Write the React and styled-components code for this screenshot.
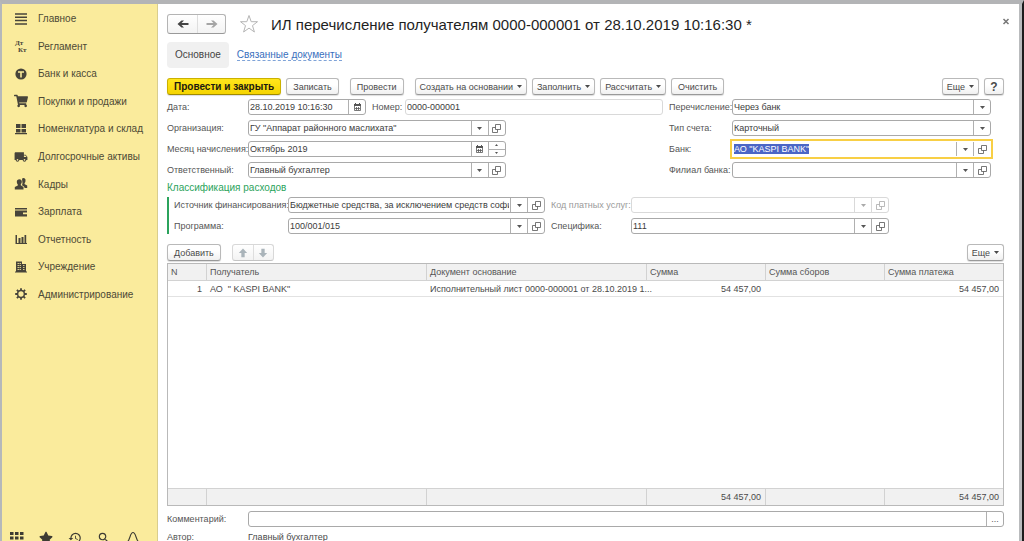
import { useEffect, useRef } from "react";
import styled, { createGlobalStyle, css } from "styled-components";
import { FaShoppingCart, FaStar } from "react-icons/fa";
import { MdHistory, MdLocalShipping, MdSearch } from "react-icons/md";

const GlobalStyle = createGlobalStyle`
  * {
    box-sizing: border-box;
  }

  body {
    margin: 0;
    overflow: hidden;
    font-family: "Liberation Sans", Arial, sans-serif;
    font-size: 9px;
    color: #4a4a4a;
  }

  button,
  input,
  select {
    margin: 0;
    font: inherit;
    color: inherit;
  }
`;

const Frame = styled.div`
  height: calc(100vh + 4px);
  display: flex;
  border-top: 4px solid #b3b4b6;
  border-left: 2px solid #b5b8ba;
  border-right: 2px solid #1c1c1c;
`;

const Sidebar = styled.aside`
  flex: 0 0 156px;
  display: flex;
  flex-direction: column;
  justify-content: space-between;
  background: #faeb9c;
  border-right: 1px solid #d9cd8d;
`;

const Menu = styled.nav`
  height: 303px;
  display: flex;
  flex-direction: column;
  margin-top: 1px;
`;

const MenuLink = styled.a`
  flex: 1;
  display: flex;
  align-items: center;
  gap: 10px;
  padding-left: 12px;
  color: #4d4936;
  font-size: 10px;
  text-decoration: none;
  white-space: nowrap;

  svg {
    width: 14px;
    height: 14px;
    color: #47443a;
  }
`;

const QuickBar = styled.div`
  display: flex;
  gap: 15px;
  padding: 0 0 0 8px;
`;

const IconButton = styled.button`
  display: flex;
  padding: 0;
  border: 0;
  background: none;
  color: #3d3b33;

  svg {
    width: 14px;
    height: 14px;
  }
`;

const Main = styled.main`
  flex: 1;
  min-width: 0;
  display: flex;
  flex-direction: column;
  padding: 10px 15px 0 9px;
  background: #fff;
  border-right: 3px solid #b9bbbd;
`;

const TitleRow = styled.header`
  display: flex;
  align-items: center;
  height: 20px;
`;

const Title = styled.h1`
  flex: 1;
  margin: 0 0 0 12px;
  font-size: 15px;
  font-weight: 400;
  color: #1f1f1f;
  white-space: nowrap;
`;

const ButtonPair = styled.div`
  display: flex;
  border: 1px solid ${(p) => (p.$faint ? "#d8d8d8" : "#b4b4b4")};
  border-bottom-color: ${(p) => (p.$faint ? "#c4c4c4" : "#999")};
  border-radius: 3px;
  background: linear-gradient(#fff, #f3f3f3);
`;

const PairButton = styled.button`
  display: flex;
  align-items: center;
  justify-content: center;
  width: ${(p) => p.$width}px;
  height: ${(p) => p.$height}px;
  padding: 0;
  border: 0;
  background: none;

  & + & {
    border-left: 1px solid #dedede;
  }
`;

const StarButton = styled(IconButton)`
  margin-left: 13px;

  svg {
    width: 20px;
    height: 20px;
  }
`;

const CloseButton = styled(IconButton)`
  align-self: flex-start;
  margin-right: -7px;

  svg {
    width: 10px;
    height: 14px;
  }
`;

const Tabs = styled.nav`
  display: flex;
  align-items: center;
  gap: 8px;
  margin-top: 8px;
  font-size: 10px;
`;

const Tab = styled.a`
  padding: 7px 8px;
  line-height: 12px;
  border-radius: 4px;
  background: #f0f0f0;
  color: #444;
  text-decoration: none;
`;

const TabLink = styled.a`
  color: #3a6fbd;
  line-height: 11px;
  text-decoration: none;
  border-bottom: 1px dashed #7fa3d8;
`;

const Toolbar = styled.div`
  display: flex;
  align-items: center;
  gap: 5px;
  margin-top: ${(p) => p.$top}px;
`;

const Group = styled.div`
  display: flex;
  gap: 5px;
  margin-right: ${(p) => p.$after || 0}px;
`;

const Spacer = styled.div`
  flex: 1;
`;

const Button = styled.button`
  display: flex;
  align-items: center;
  justify-content: center;
  gap: 4px;
  height: 17px;
  padding: 0 ${(p) => (p.$menu ? 4 : 6)}px;
  border: 1px solid #b9b9b9;
  border-bottom-color: #999;
  border-radius: 3px;
  background: linear-gradient(#fff 40%, #f0f0f0);
  box-shadow: 0 1px 1px #ddd;
  white-space: nowrap;

  ${(p) =>
    p.$primary &&
    css`
      border-color: #cbb100;
      border-bottom-color: #a08a00;
      background: linear-gradient(#ffe61c, #f5d400);
      color: #1c1a10;
      font-size: 10px;
      font-weight: 700;
    `}
`;

const HelpButton = styled(Button)`
  width: 20px;
  font-size: 12px;
  font-weight: 700;
`;

const FormGrid = styled.div`
  display: grid;
  grid-template-columns: 496fr 322fr;
  gap: 6px;
  margin: 4px 13px 0 0;
`;

const FieldColumn = styled.div`
  display: flex;
  flex-direction: column;
  gap: 5px;
  min-width: 0;
`;

const Row = styled.div`
  display: flex;
  align-items: center;
  height: 16px;
`;

const Label = styled.label`
  flex: 0 0 ${(p) => p.$width}px;
  min-width: 0;
  color: ${(p) => (p.$muted ? "#9a9a9a" : "#555")};
  white-space: nowrap;
`;

const FieldBox = styled.div`
  flex: ${(p) => (p.$basis ? `0 0 ${p.$basis}` : "1")};
  min-width: 0;
  display: flex;
  height: 16px;
  border: 1px solid ${(p) => (p.$muted ? "#d9d9d9" : "#a9a9a9")};
  border-radius: 3px;
  background: #fff;
  color: ${(p) => (p.$muted ? "#aaa" : "#555")};
  overflow: hidden;

  ${(p) =>
    p.$focused &&
    css`
      border-color: #fff;
      border-radius: 0;
      outline: 2px solid #f8cf45;
    `}
`;

const TextInput = styled.input`
  flex: 1;
  min-width: 0;
  padding: 0 1px;
  border: 0;
  outline: 0;
  background: none;
  color: #3c3c3c;

  &::selection {
    background: #4b66c6;
    color: #fff;
  }
`;

const Select = styled.select`
  flex: 1;
  min-width: 0;
  padding: 0 1px;
  border: 0;
  outline: 0;
  appearance: none;
  background: none;
  color: #3c3c3c;
`;

const FieldButton = styled.button`
  flex: 0 0 17px;
  display: flex;
  align-items: center;
  justify-content: center;
  padding: 0;
  border: 0;
  border-left: 1px solid ${(p) => (p.$muted ? "#d9d9d9" : "#b0b0b0")};
  background: none;
`;

const Spinner = styled.div`
  flex: 0 0 17px;
  display: flex;
  flex-direction: column;
  border-left: 1px solid #b0b0b0;
`;

const SpinButton = styled.button`
  flex: 1;
  display: flex;
  align-items: center;
  justify-content: center;
  padding: 0;
  border: 0;
  background: none;

  & + & {
    border-top: 1px solid #b0b0b0;
  }
`;

const SectionTitle = styled.h2`
  margin: 4px 0 3px;
  color: #2ba35c;
  font-size: 10px;
  font-weight: 400;
  line-height: 12px;
`;

const Section = styled.section`
  display: grid;
  grid-template-columns: 371fr 338fr;
  gap: 6px;
  margin-right: 115px;
  padding-left: 5px;
  border-left: 2px solid #2ba35c;
`;

const TableBox = styled.div`
  flex: 1;
  min-height: 0;
  display: grid;
  margin-top: 2px;
  border: 1px solid #b9b9b9;
`;

const Table = styled.table`
  width: 100%;
  height: 100%;
  table-layout: fixed;
  border-collapse: separate;
  border-spacing: 0;
`;

const HeadCell = styled.th`
  height: 17px;
  padding: 0 3px;
  border-left: ${(p) => (p.$first ? 0 : "1px solid #d2d2d2")};
  border-bottom: 1px solid #d2d2d2;
  background: #f1f1f1;
  color: #555;
  font-weight: 400;
  text-align: left;
`;

const Cell = styled.td`
  height: 16px;
  padding: 0 4px;
  border-bottom: 1px solid #e2e2e2;
  text-align: ${(p) => (p.$right ? "right" : "left")};
  white-space: pre;
`;

const FillerCell = styled.td`
  height: 100%;
  padding: 0;
`;

const FootCell = styled.td`
  height: 17px;
  padding: 0 4px;
  border-left: ${(p) => (p.$first ? 0 : "1px solid #d2d2d2")};
  border-top: 1px solid #d2d2d2;
  background: #f1f1f1;
  text-align: right;
`;

const Footer = styled.footer`
  display: flex;
  flex-direction: column;
  gap: 2px;
  margin-top: 5px;
`;

const Caret = () => (
  <svg width="5" height="3" viewBox="0 0 5 3" aria-hidden="true">
    <path d="M0 0h5L2.5 3z" fill="currentColor" />
  </svg>
);

const OpenIcon = () => (
  <svg
    width="9"
    height="9"
    viewBox="0 0 9 9"
    fill="none"
    stroke="currentColor"
    strokeWidth="0.8"
    aria-hidden="true"
  >
    <path d="M3.5 0.5h5v5h-5z" />
    <path d="M3.5 3.5h-3v5h5v-3" />
  </svg>
);

const CalendarIcon = () => (
  <svg width="9" height="9" viewBox="0 0 9 9" aria-hidden="true">
    <path d="M1 1h7v2H1zM2 0h1v1H2zM6 0h1v1H6z" fill="currentColor" />
    <path
      d="M1.5 2.5h6v5h-6zM2 5.5h5M3.5 4v3M5.5 4v3"
      fill="none"
      stroke="currentColor"
      strokeWidth="0.8"
    />
  </svg>
);

const Arrow = ({ dir, size, color }) => {
  const turn = { right: 0, down: 90, left: 180, up: 270 }[dir];
  return (
    <svg width={size} height={size} viewBox="0 0 12 12" aria-hidden="true">
      <path
        d={
          dir === "up" || dir === "down"
            ? "M1 4h5V1l5.5 5L6 11V8H1z"
            : "M0.5 5h7L5 2.5h2.5L11.5 6 7.5 9.5H5L7.5 7h-7z"
        }
        fill={color}
        transform={`rotate(${turn} 6 6)`}
      />
    </svg>
  );
};

const LinesIcon = () => (
  <svg viewBox="0 0 14 14">
    <path
      d="M1 2h12M1 5.3h12M1 8.6h12M1 12h12"
      stroke="currentColor"
      strokeWidth="1.5"
    />
  </svg>
);

const LedgerIcon = () => (
  <svg
    viewBox="0 0 14 14"
    fontFamily="Liberation Serif"
    fontSize="7"
    fontWeight="700"
  >
    <text x="1" y="6" fill="currentColor">
      Дт
    </text>
    <text x="4" y="13" fill="currentColor">
      Кт
    </text>
  </svg>
);

const CoinIcon = () => (
  <svg viewBox="0 0 14 14">
    <circle cx="7" cy="7" r="5.6" fill="currentColor" />
    <path d="M4 5h6M7 5v5.5" stroke="#faeb9c" strokeWidth="1.6" />
  </svg>
);

const BlocksIcon = () => (
  <svg viewBox="0 0 14 14">
    <path
      d="M2 2h4.5v4H2zM7.5 2H12v4H7.5zM2 7h4.500v3.500H2zM7.500 7H12v3.500H7.500zM1 11h12v1.200H1z"
      fill="currentColor"
    />
  </svg>
);

const PeopleIcon = () => (
  <svg viewBox="0 0 14 14" fill="currentColor">
    <path d="M8 1.8a2 2.3 0 0 1 3.5 2c0 1.2-.5 1.8-1 2.4l.2 1 2.5 1.3v2.5h-2.5L10 9.5 8 8.3l.5-2z" />
    <path d="M5.5 2.2c1.500 0 2.300 1 2.300 2.500 0 1.200-.5 2-1 2.600v1L9.500 10v2.500H.8V10l3-1.600v-1c-.6-.7-1-1.500-1-2.700 0-1.500 1-2.500 2.700-2.500z" />
  </svg>
);

const WalletIcon = () => (
  <svg viewBox="0 0 14 14" fill="currentColor">
    <path d="M1 3h12v1.600H1zM1 5.500h12v2H9v1.800h4v2.200H1z" />
  </svg>
);

const ChartIcon = () => (
  <svg viewBox="0 0 14 14" fill="currentColor">
    <path d="M1.5 3H3v8H1.500zM4.500 6h2v5h-2zM7.500 5h2v6h-2zM10.500 3h1.700v8h-1.700zM1.500 11H13v1H1.500z" />
  </svg>
);

const BuildingIcon = () => (
  <svg viewBox="0 0 14 14">
    <path
      d="M2 1.5h6v10H2zM8 4h4v7.500H8zM1 11.500h12v1H1z"
      fill="currentColor"
    />
    <path
      d="M3.5 3.5h3.500M3.500 5.500h3.500M3.500 7.500h3.500M3.500 9.500h3.500M9 5.500h2M9 7.500h2M9 9.500h2"
      stroke="#faeb9c"
      strokeWidth="0.8"
      strokeDasharray="1.5 0.5"
    />
  </svg>
);

const GearIcon = () => (
  <svg viewBox="0 0 14 14" fill="none" stroke="currentColor">
    <circle cx="7" cy="7" r="3.4" strokeWidth="1.5" />
    <path
      d="M7 1.200v2.400M7 10.400v2.400M1.200 7h2.400M10.400 7h2.400M2.900 2.900l1.700 1.700M9.400 9.400l1.700 1.700M2.900 11.100l1.700-1.700M9.400 4.600l1.700-1.700"
      strokeWidth="1.800"
    />
  </svg>
);

const GridIcon = () => (
  <svg viewBox="0 0 14 14" fill="currentColor">
    <path d="M0 1h3.500v3H0zM5 1h3.500v3H5zM10 1h3.500v3H10zM0 5.500h3.500v3H0zM5 5.500h3.500v3H5zM10 5.500h3.500v3H10zM0 10h3.500v3H0zM5 10h3.500v3H5zM10 10h3.500v3H10z" />
  </svg>
);

const BellIcon = () => (
  <svg viewBox="0 0 14 14" fill="none" stroke="currentColor" strokeWidth="1.2">
    <path d="M7 1.500C4 1.500 4.500 8 1.500 11h11C9.500 8 10 1.500 7 1.500zM6 13h2" />
  </svg>
);

const menuItems = [
  ["Главное", LinesIcon],
  ["Регламент", LedgerIcon],
  ["Банк и касса", CoinIcon],
  ["Покупки и продажи", FaShoppingCart],
  ["Номенклатура и склад", BlocksIcon],
  ["Долгосрочные активы", MdLocalShipping],
  ["Кадры", PeopleIcon],
  ["Зарплата", WalletIcon],
  ["Отчетность", ChartIcon],
  ["Учреждение", BuildingIcon],
  ["Администрирование", GearIcon],
];

const quickItems = [
  ["Все функции", GridIcon],
  ["Избранное", FaStar],
  ["История", MdHistory],
  ["Поиск", MdSearch],
  ["Оповещения", BellIcon],
];

function LookupField({ id, value, basis, muted, focused, inputRef }) {
  return (
    <FieldBox $basis={basis} $muted={muted} $focused={focused}>
      <TextInput id={id} ref={inputRef} defaultValue={value} disabled={muted} />
      <FieldButton type="button" aria-label="Выбрать" $muted={muted}>
        <Caret />
      </FieldButton>
      <FieldButton type="button" aria-label="Открыть" $muted={muted}>
        <OpenIcon />
      </FieldButton>
    </FieldBox>
  );
}

function SelectField({ id, options }) {
  return (
    <FieldBox>
      <Select id={id}>
        {options.map((option) => (
          <option key={option}>{option}</option>
        ))}
      </Select>
      <FieldButton type="button" aria-label="Выбрать">
        <Caret />
      </FieldButton>
    </FieldBox>
  );
}

function PaymentForm() {
  const bankRef = useRef(null);

  useEffect(() => {
    bankRef.current.focus();
    bankRef.current.select();
  }, []);

  return (
    <FormGrid>
      <FieldColumn>
        <Row>
          <Label htmlFor="date" $width={81}>Дата:</Label>
          <FieldBox $basis="118px">
            <TextInput id="date" defaultValue="28.10.2019 10:16:30" />
            <FieldButton type="button" aria-label="Календарь">
              <CalendarIcon />
            </FieldButton>
          </FieldBox>
          <Group $after={6} />
          <Label htmlFor="number" $width={33}>Номер:</Label>
          <FieldBox $muted>
            <TextInput id="number" defaultValue="0000-000001" />
          </FieldBox>
        </Row>
        <Row>
          <Label htmlFor="org" $width={81}>Организация:</Label>
          <LookupField id="org" basis="52%" value={'ГУ "Аппарат районного маслихата"'} />
        </Row>
        <Row>
          <Label htmlFor="month" $width={81}>Месяц начисления:</Label>
          <FieldBox $basis="52%">
            <TextInput id="month" defaultValue="Октябрь 2019" />
            <FieldButton type="button" aria-label="Календарь">
              <CalendarIcon />
            </FieldButton>
            <Spinner>
              <SpinButton type="button" aria-label="Больше">
                <svg width="3" height="2" viewBox="0 0 3 2">
                  <path d="M0 2h3L1.5 0z" fill="currentColor" />
                </svg>
              </SpinButton>
              <SpinButton type="button" aria-label="Меньше">
                <svg width="3" height="2" viewBox="0 0 3 2">
                  <path d="M0 0h3L1.5 2z" fill="currentColor" />
                </svg>
              </SpinButton>
            </Spinner>
          </FieldBox>
        </Row>
        <Row>
          <Label htmlFor="owner" $width={81}>Ответственный:</Label>
          <LookupField id="owner" basis="52%" value="Главный бухгалтер" />
        </Row>
      </FieldColumn>

      <FieldColumn>
        <Row>
          <Label htmlFor="transfer" $width={63}>Перечисление:</Label>
          <SelectField id="transfer" options={["Через банк", "Через кассу"]} />
        </Row>
        <Row>
          <Label htmlFor="account" $width={63}>Тип счета:</Label>
          <SelectField id="account" options={["Карточный", "Текущий"]} />
        </Row>
        <Row>
          <Label htmlFor="bank" $width={63}>Банк:</Label>
          <LookupField id="bank" inputRef={bankRef} focused value={'АО "KASPI BANK"'} />
        </Row>
        <Row>
          <Label htmlFor="branch" $width={63}>Филиал банка:</Label>
          <LookupField id="branch" value="" />
        </Row>
      </FieldColumn>
    </FormGrid>
  );
}

function ExpenseSection() {
  return (
    <>
      <SectionTitle>Классификация расходов</SectionTitle>
      <Section>
        <FieldColumn>
          <Row>
            <Label htmlFor="source" $width={114}>Источник финансирования:</Label>
            <LookupField
              id="source"
              value="Бюджетные средства, за исключением средств софинансирования"
            />
          </Row>
          <Row>
            <Label htmlFor="program" $width={114}>Программа:</Label>
            <LookupField id="program" value="100/001/015" />
          </Row>
        </FieldColumn>
        <FieldColumn>
          <Row>
            <Label htmlFor="service" $width={80} $muted>Код платных услуг:</Label>
            <LookupField id="service" value="" muted />
          </Row>
          <Row>
            <Label htmlFor="specific" $width={80}>Специфика:</Label>
            <LookupField id="specific" value="111" />
          </Row>
        </FieldColumn>
      </Section>
    </>
  );
}

const columns = [
  { title: "N", width: "38px" },
  { title: "Получатель" },
  { title: "Документ основание" },
  { title: "Сумма", width: "119px", total: "54 457,00" },
  { title: "Сумма сборов", width: "119px" },
  { title: "Сумма платежа", width: "119px", total: "54 457,00" },
];

function PaymentsTable() {
  return (
    <TableBox>
      <Table>
        <colgroup>
          {columns.map((col) => (
            <col key={col.title} width={col.width} />
          ))}
        </colgroup>
        <thead>
          <tr>
            {columns.map((col, i) => (
              <HeadCell key={col.title} $first={i === 0}>
                {col.title}
              </HeadCell>
            ))}
          </tr>
        </thead>
        <tbody>
          <tr>
            <Cell $right>1</Cell>
            <Cell>{'АО  " KASPI BANK"'}</Cell>
            <Cell>Исполнительный лист 0000-000001 от 28.10.2019 1...</Cell>
            <Cell $right>54 457,00</Cell>
            <Cell />
            <Cell $right>54 457,00</Cell>
          </tr>
          <tr>
            <FillerCell colSpan={columns.length} />
          </tr>
        </tbody>
        <tfoot>
          <tr>
            {columns.map((col, i) => (
              <FootCell key={col.title} $first={i === 0}>
                {col.total}
              </FootCell>
            ))}
          </tr>
        </tfoot>
      </Table>
    </TableBox>
  );
}

function App() {
  return (
    <>
      <GlobalStyle />
      <Frame>
        <Sidebar>
          <Menu>
            {menuItems.map(([title, Icon]) => (
              <MenuLink key={title} href="#">
                <Icon />
                {title}
              </MenuLink>
            ))}
          </Menu>
          <QuickBar>
            {quickItems.map(([title, Icon]) => (
              <IconButton key={title} type="button" aria-label={title}>
                <Icon />
              </IconButton>
            ))}
          </QuickBar>
        </Sidebar>

        <Main>
          <TitleRow>
            <ButtonPair>
              <PairButton type="button" aria-label="Назад" $width={29} $height={18}>
                <Arrow dir="left" size={12} color="#444" />
              </PairButton>
              <PairButton type="button" aria-label="Вперед" $width={28} $height={18}>
                <Arrow dir="right" size={12} color="#a5a5a5" />
              </PairButton>
            </ButtonPair>
            <StarButton type="button" aria-label="В избранное">
              <svg viewBox="0 0 20 20" fill="none" stroke="#b5b5b5">
                <path d="M10 1.5l2.2 6.2h6.3l-5 3.9 1.9 6.4-5.4-3.9L4.6 18l1.9-6.4-5-3.9h6.3z" />
              </svg>
            </StarButton>
            <Title>ИЛ перечисление получателям 0000-000001 от 28.10.2019 10:16:30 *</Title>
            <CloseButton type="button" aria-label="Закрыть">
              <svg viewBox="0 0 10 14" stroke="#777" strokeWidth="1.5">
                <path d="M2.5 5l5 5M7.5 5l-5 5" />
              </svg>
            </CloseButton>
          </TitleRow>

          <Tabs>
            <Tab href="#">Основное</Tab>
            <TabLink href="#">Связанные документы</TabLink>
          </Tabs>

          <Toolbar $top={10}>
            <Group $after={6}>
              <Button type="button" $primary>Провести и закрыть</Button>
              <Button type="button">Записать</Button>
            </Group>
            <Group $after={6}>
              <Button type="button">Провести</Button>
            </Group>
            <Button type="button" $menu>Создать на основании <Caret /></Button>
            <Button type="button" $menu>Заполнить <Caret /></Button>
            <Button type="button" $menu>Рассчитать <Caret /></Button>
            <Button type="button">Очистить</Button>
            <Spacer />
            <Button type="button" $menu>Еще <Caret /></Button>
            <HelpButton type="button" aria-label="Справка">?</HelpButton>
          </Toolbar>

          <PaymentForm />
          <ExpenseSection />

          <Toolbar $top={10}>
            <Group $after={6}>
              <Button type="button">Добавить</Button>
            </Group>
            <ButtonPair $faint>
              <PairButton type="button" aria-label="Вверх" $width={20} $height={15}>
                <Arrow dir="up" size={10} color="#aab4ba" />
              </PairButton>
              <PairButton type="button" aria-label="Вниз" $width={20} $height={15}>
                <Arrow dir="down" size={10} color="#aab4ba" />
              </PairButton>
            </ButtonPair>
            <Spacer />
            <Button type="button" $menu>Еще <Caret /></Button>
          </Toolbar>

          <PaymentsTable />

          <Footer>
            <Row>
              <Label htmlFor="comment" $width={81}>Комментарий:</Label>
              <FieldBox>
                <TextInput id="comment" />
                <FieldButton type="button" aria-label="Изменить">...</FieldButton>
              </FieldBox>
            </Row>
            <Row>
              <Label as="span" $width={81}>Автор:</Label>
              <span>Главный бухгалтер</span>
            </Row>
          </Footer>
        </Main>
      </Frame>
    </>
  );
}

export default App;
